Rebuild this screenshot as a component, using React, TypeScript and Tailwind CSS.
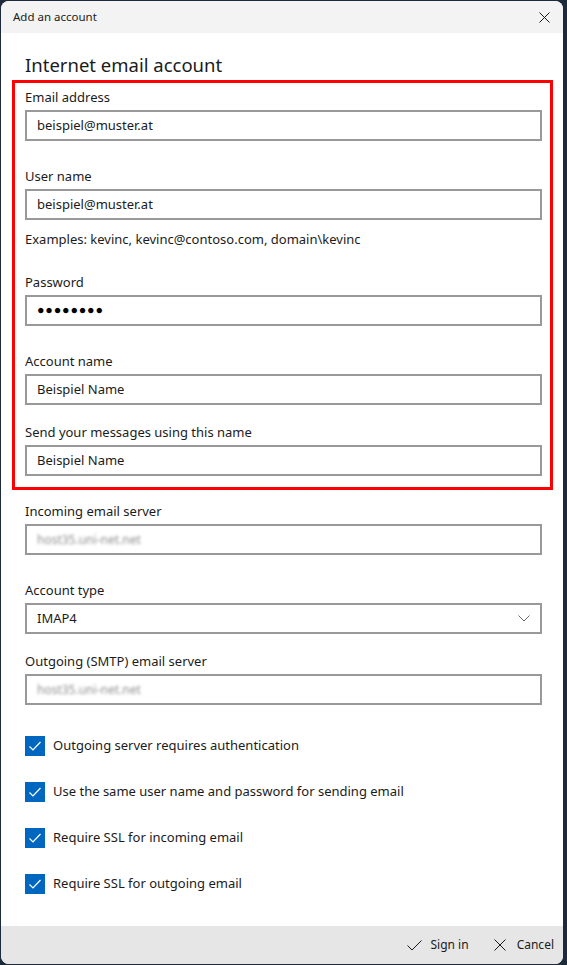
const font = { fontFamily: '"Segoe UI", "Noto Sans", sans-serif' };

const Label = ({ text, className = "" }: { text: string; className?: string }) => (
  <div className={`h-5 text-[13px] leading-5 text-[#1b1b1b] ${className}`}>{text}</div>
);

const Field = ({ value, children }: { value?: string; children?: React.ReactNode }) => (
  <div className="mt-[3px] flex h-[31px] items-center border-2 border-[#999999] bg-white pl-[10px] text-[13px] text-[#1b1b1b]">
    {children ?? value}
  </div>
);

const Blurred = () => (
  <span className="text-[12px] text-[#8f8f8f] blur-[1.4px]">host35.uni-net.net</span>
);

const CheckRow = ({ text, first = false }: { text: string; first?: boolean }) => (
  <div className={`flex h-5 items-center ${first ? "mt-[31px]" : "mt-[26px]"}`}>
    <div className="flex h-5 w-5 items-center justify-center bg-[#0067c0]">
      <svg width="14" height="14" viewBox="0 0 14 14" fill="none">
        <path d="M1.5 7.5 L5 11 L12.5 3" stroke="white" strokeWidth="1.2" />
      </svg>
    </div>
    <span className="ml-[8px] text-[13px] text-[#1b1b1b]">{text}</span>
  </div>
);

export default function App() {
  return (
    <div className="h-[965px] w-[567px] bg-[#1d2a3b] p-px" style={font}>
      <div className="flex h-[963px] w-[562px] flex-col overflow-hidden rounded-lg bg-white">
        <div className="flex h-8 shrink-0 items-center justify-between bg-[#f3f3f3] pl-3 pr-[13px]">
          <span className="text-[11.5px] text-[#1b1b1b]">Add an account</span>
          <svg width="11" height="11" viewBox="0 0 11 11">
            <path d="M0.5 0.5 L10.5 10.5 M10.5 0.5 L0.5 10.5" stroke="#1b1b1b" strokeWidth="1" />
          </svg>
        </div>
        <div className="flex flex-1 flex-col pl-6 pr-[21px]">
          <h1 className="mt-[18px] h-7 text-[18.5px] leading-7 text-[#1b1b1b]">Internet email account</h1>
          <div className="-ml-[13px] -mr-[11px] mt-[1px] border-[3px] border-[#ff0000] pb-[11px] pl-[10px] pr-[8px] pt-1">
            <Label text="Email address" />
            <Field value="beispiel@muster.at" />
            <Label text="User name" className="mt-[25px]" />
            <Field value="beispiel@muster.at" />
            <Label text="Examples: kevinc, kevinc@contoso.com, domain\kevinc" className="mt-[9px]" />
            <Label text="Password" className="mt-[23px]" />
            <Field>
              <span className="text-[12.5px] tracking-[0.8px] text-black">●●●●●●●●</span>
            </Field>
            <Label text="Account name" className="mt-[25px]" />
            <Field value="Beispiel Name" />
            <Label text="Send your messages using this name" className="mt-[17px]" />
            <Field value="Beispiel Name" />
          </div>
          <Label text="Incoming email server" className="mt-[11px]" />
          <Field>
            <Blurred />
          </Field>
          <Label text="Account type" className="mt-[25px]" />
          <Field>
            <div className="flex w-full items-center justify-between pr-[10px]">
              <span>IMAP4</span>
              <svg width="12" height="7" viewBox="0 0 12 7">
                <path d="M0.5 0.5 L6 6 L11.5 0.5" stroke="#6b6b6b" strokeWidth="1" fill="none" />
              </svg>
            </div>
          </Field>
          <Label text="Outgoing (SMTP) email server" className="mt-[17px]" />
          <Field>
            <Blurred />
          </Field>
          <CheckRow text="Outgoing server requires authentication" first />
          <CheckRow text="Use the same user name and password for sending email" />
          <CheckRow text="Require SSL for incoming email" />
          <CheckRow text="Require SSL for outgoing email" />
        </div>
        <div className="flex h-[38px] shrink-0 items-center justify-end gap-[25px] bg-[#e6e6e6] pr-[9px] text-[12px] text-[#1b1b1b]">
          <div className="flex items-center gap-[9px]">
            <svg width="15" height="11" viewBox="0 0 15 11">
              <path d="M0.5 5.5 L5 10 L14.5 0.5" stroke="#1b1b1b" strokeWidth="1" fill="none" />
            </svg>
            <span>Sign in</span>
          </div>
          <div className="flex items-center gap-[11px]">
            <svg width="12" height="12" viewBox="0 0 12 12">
              <path d="M0.5 0.5 L11.5 11.5 M11.5 0.5 L0.5 11.5" stroke="#1b1b1b" strokeWidth="1" />
            </svg>
            <span>Cancel</span>
          </div>
        </div>
      </div>
    </div>
  );
}
